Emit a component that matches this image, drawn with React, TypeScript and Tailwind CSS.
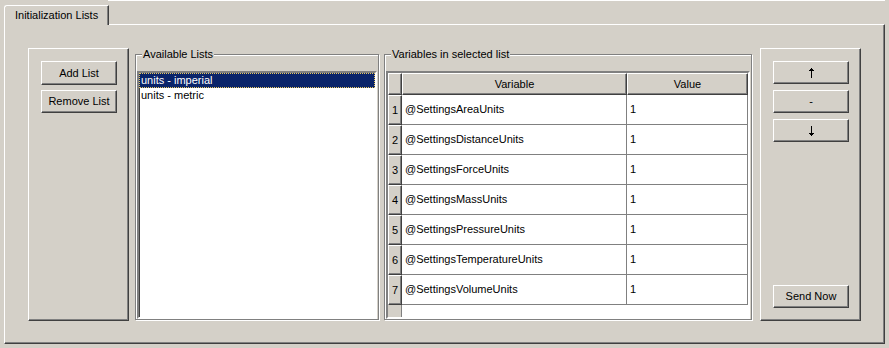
const raised =
  'border-t border-l border-r border-b border-t-white border-l-white border-r-[#404040] border-b-[#404040] shadow-[inset_-1px_-1px_0_#808080]'
const sunken =
  'border-2 border-t-[#808080] border-l-[#808080] border-r-white border-b-white shadow-[inset_1px_1px_0_#404040]'
const etched =
  'border border-[#808080] shadow-[1px_1px_0_#fff,inset_1px_1px_0_#fff]'

const variables = [
  '@SettingsAreaUnits',
  '@SettingsDistanceUnits',
  '@SettingsForceUnits',
  '@SettingsMassUnits',
  '@SettingsPressureUnits',
  '@SettingsTemperatureUnits',
  '@SettingsVolumeUnits',
]

function Button({ label, h = 'h-[24px]' }: { label: React.ReactNode; h?: string }) {
  return (
    <div className={`${raised} ${h} flex w-[76px] items-center justify-center bg-[#d4d0c8]`}>
      {label}
    </div>
  )
}

function Arrow({ down = false }: { down?: boolean }) {
  return (
    <svg width="5" height="10" viewBox="0 0 5 10" className={down ? 'rotate-180' : ''}>
      <rect x="2" y="0" width="1" height="10" fill="#000" />
      <rect x="1" y="1" width="3" height="1" fill="#000" />
      <rect x="0" y="2" width="5" height="1" fill="#000" />
    </svg>
  )
}

function GroupBox({ title, width, children }: { title: string; width: string; children: React.ReactNode }) {
  return (
    <fieldset className={`${etched} ${width} flex h-[272px] min-w-0 flex-col px-[1px] pt-[10px]`}>
      <legend className="ml-[5px] bg-[#d4d0c8] px-[1px] leading-[13px]">{title}</legend>
      {children}
    </fieldset>
  )
}

export default function App() {
  return (
    <div className="h-[348px] w-[889px] overflow-hidden bg-[#d4d0c8] font-['Liberation_Sans',Arial,sans-serif] text-[11px] text-black">
      <div className="ml-[108px] mr-[4px] h-px bg-white" />
      <div className="px-[4px] pt-[4px]">
        <div className="relative z-10 -mb-px flex h-[20px] w-[105px] items-center rounded-tl-[3px] border-l border-r border-t border-l-white border-r-[#404040] border-t-white bg-[#d4d0c8] pl-[10px] shadow-[inset_-1px_0_0_#808080]">
          Initialization Lists
        </div>
        <div className={`${raised} flex h-[320px] w-[881px] pl-[23px] pt-[23px]`}>
          {/* left buttons */}
          <div className={`${raised} flex h-[273px] w-[101px] flex-col gap-[5px] pl-[12px] pt-[12px]`}>
            <Button label="Add List" />
            <Button label="Remove List" h="h-[23px]" />
          </div>

          <div className="ml-[6px]">
            <GroupBox title="Available Lists" width="w-[244px]">
              <div className={`${sunken} h-[248px] bg-white`}>
                <div className="flex h-[15px] items-center border border-dotted border-[#e8c860] bg-[#0a246a] pl-[1px] text-white">
                  units - imperial
                </div>
                <div className="flex h-[15px] items-center pl-[2px]">units - metric</div>
              </div>
            </GroupBox>
          </div>

          <div className="ml-[5px]">
            <GroupBox title="Variables in selected list" width="w-[368px]">
              <div className={`${sunken} flex h-[248px] w-[364px] flex-col bg-white`}>
                <div className="grid h-[22px] grid-cols-[14px_225px_121px]">
                  <div className={`${raised} bg-[#d4d0c8]`} />
                  <div className={`${raised} flex items-center justify-center bg-[#d4d0c8]`}>Variable</div>
                  <div className={`${raised} flex items-center justify-center bg-[#d4d0c8]`}>Value</div>
                </div>
                {variables.map((v, i) => (
                  <div key={v} className="grid h-[30px] grid-cols-[14px_225px_121px]">
                    <div className={`${raised} flex items-center justify-center bg-[#d4d0c8]`}>{i + 1}</div>
                    <div className="flex items-center border-b border-r border-[#808080] pl-[3px]">{v}</div>
                    <div className="flex items-center border-b border-r border-[#808080] pl-[3px]">1</div>
                  </div>
                ))}
                <div className="flex flex-1">
                  <div className="w-[14px] border-r border-[#808080] bg-[#d4d0c8]" />
                </div>
              </div>
            </GroupBox>
          </div>

          {/* right buttons */}
          <div className={`${raised} ml-[8px] flex h-[273px] w-[101px] flex-col gap-[6px] pb-[12px] pl-[12px] pt-[12px]`}>
            <Button label={<Arrow />} h="h-[23px]" />
            <Button label="-" h="h-[23px]" />
            <Button label={<Arrow down />} h="h-[23px]" />
            <div className="mt-auto">
              <Button label="Send Now" h="h-[23px]" />
            </div>
          </div>
        </div>
      </div>
    </div>
  )
}
